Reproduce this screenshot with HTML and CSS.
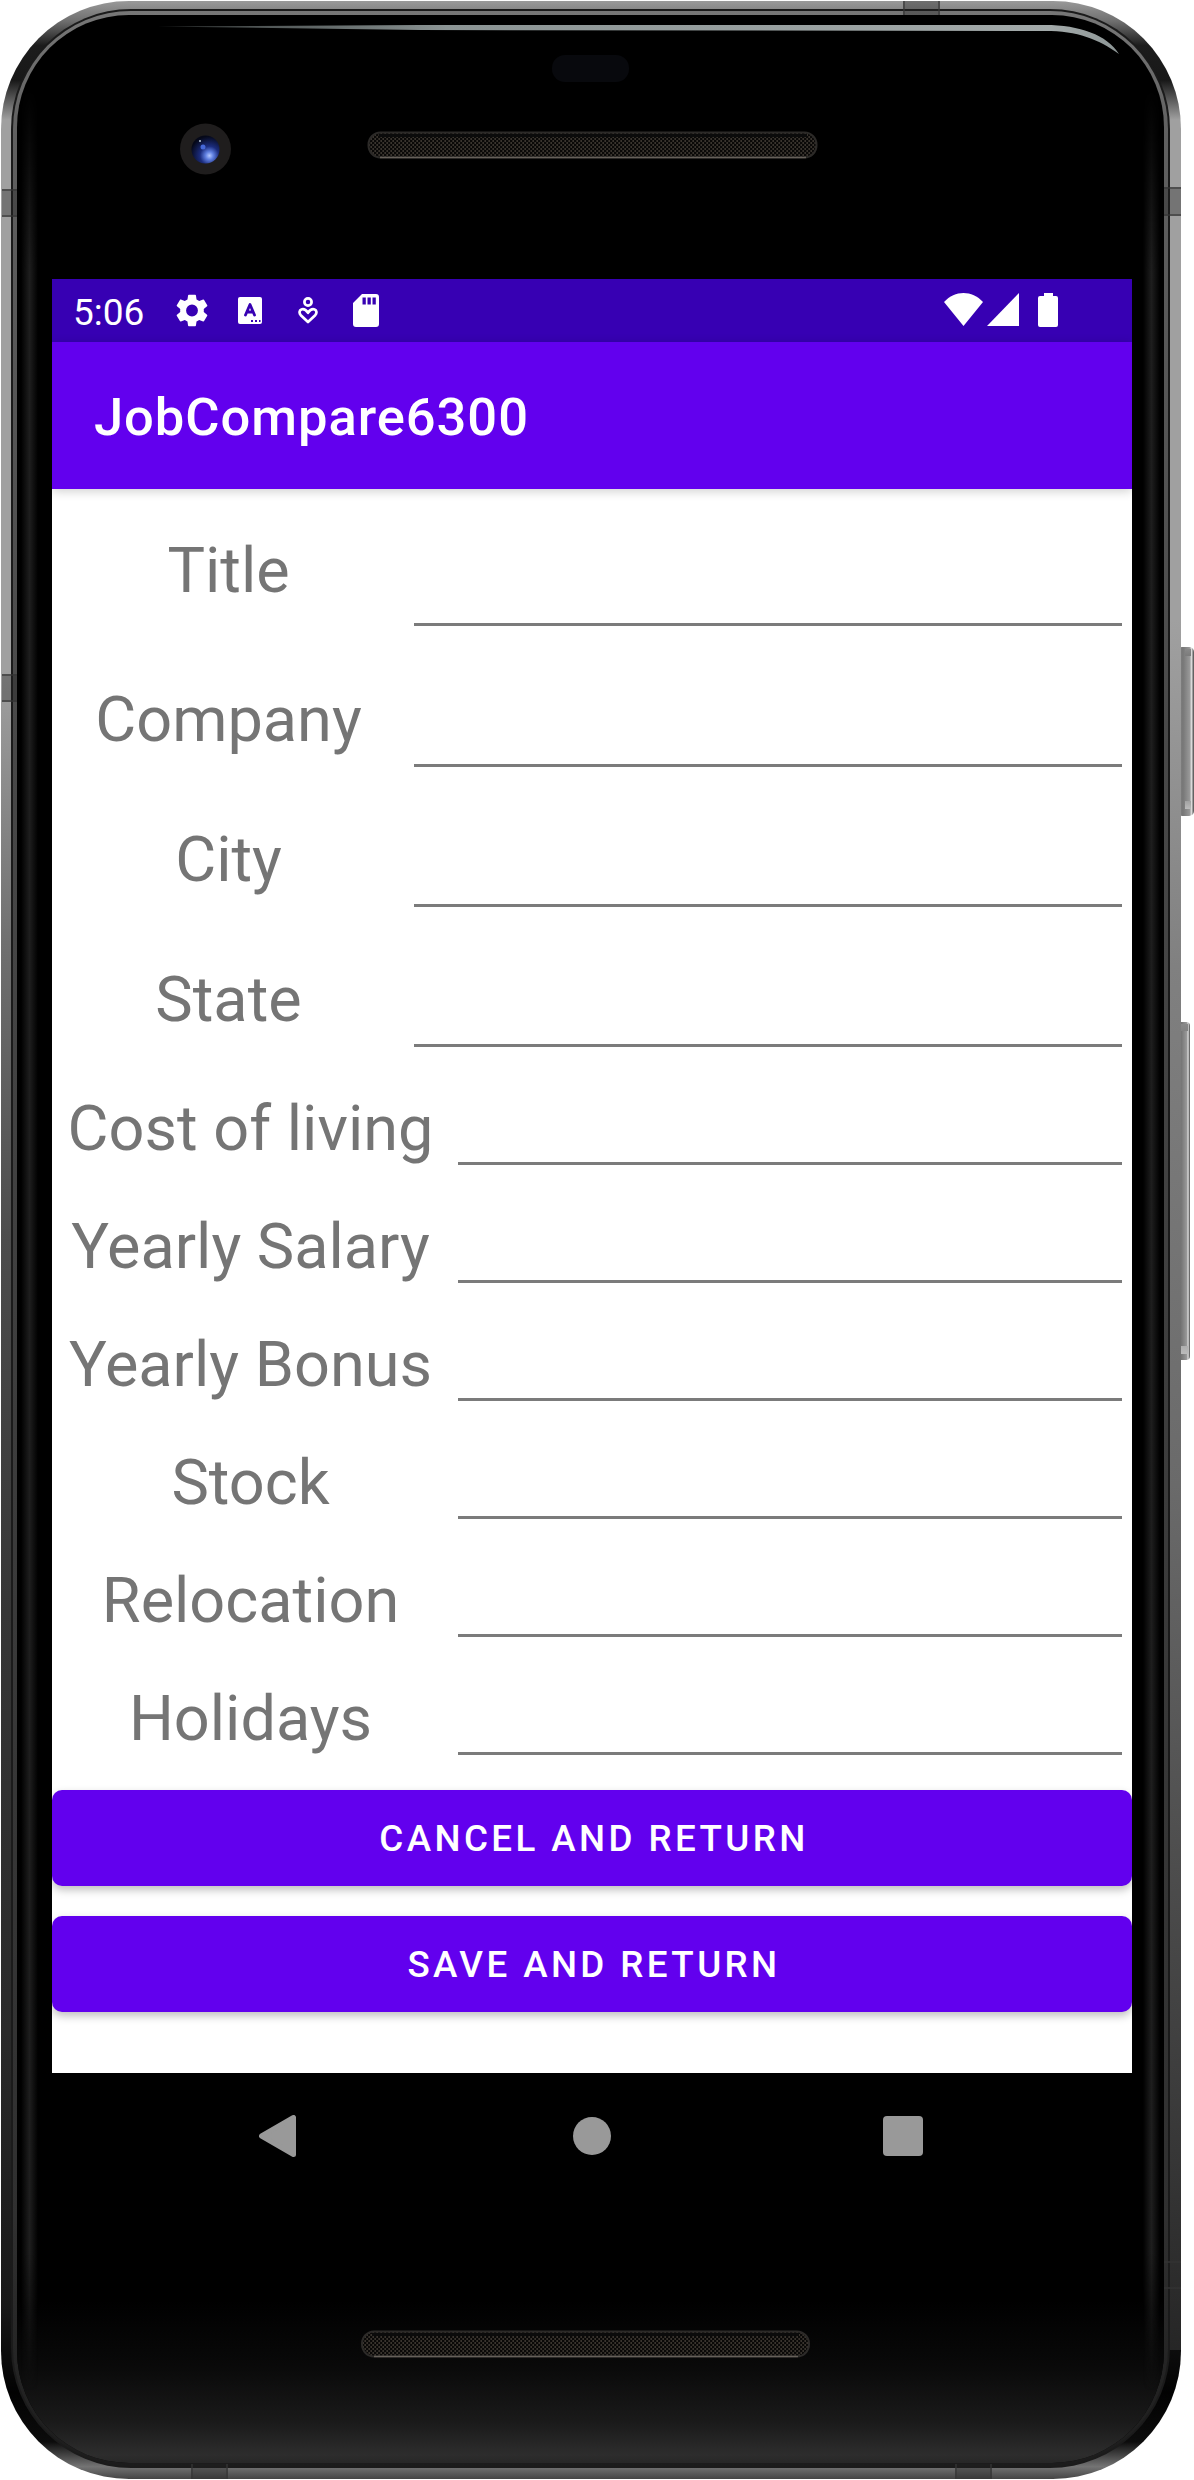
FILE: index.html
```
<!DOCTYPE html>
<html lang="en">
<head>
<meta charset="utf-8">
<title>JobCompare6300</title>
<link rel="stylesheet" href="styles.css">
</head>
<body>
<div class="phone">
  <svg class="frame" viewBox="0 0 1194 2480" aria-hidden="true">
    <defs>
      <linearGradient id="rim" x1="0" y1="0" x2="0" y2="1">
        <stop offset="0" stop-color="#999"/><stop offset=".008" stop-color="#707070"/><stop offset=".018" stop-color="#1c1c1c"/><stop offset=".032" stop-color="#181818"/>
        <stop offset=".048" stop-color="#a0a0a0"/><stop offset=".27" stop-color="#a0a0a0"/><stop offset=".38" stop-color="#707070"/>
        <stop offset=".5" stop-color="#4c4c4c"/><stop offset=".65" stop-color="#363636"/><stop offset=".82" stop-color="#2a2a2a"/><stop offset=".93" stop-color="#181818"/><stop offset=".965" stop-color="#020202"/>
        <stop offset=".985" stop-color="#0c0c0c"/><stop offset=".995" stop-color="#747474"/><stop offset="1" stop-color="#444"/>
      </linearGradient>
      <linearGradient id="rimRight" x1="0" y1="0" x2="0" y2="1">
        <stop offset="0" stop-color="#a0a0a0"/><stop offset=".2" stop-color="#808080"/><stop offset=".5" stop-color="#6a6a6a"/><stop offset=".85" stop-color="#3c3c3c"/><stop offset="1" stop-color="#262626"/>
      </linearGradient>
      <linearGradient id="inner" x1="0" y1="0" x2="0" y2="1">
        <stop offset="0" stop-color="#777"/><stop offset=".05" stop-color="#606060"/><stop offset=".3" stop-color="#484848"/><stop offset=".9" stop-color="#303030"/><stop offset="1" stop-color="#1c1c1c"/>
      </linearGradient>
      <linearGradient id="chin" x1="0" y1="0" x2="0" y2="1">
        <stop offset="0" stop-color="#000"/><stop offset=".4" stop-color="#090909"/><stop offset=".75" stop-color="#1a1a1a"/><stop offset=".95" stop-color="#2d2d2d"/><stop offset="1" stop-color="#272727"/>
      </linearGradient>
      <linearGradient id="sheen"><stop offset="0" stop-color="#1e1e1e" stop-opacity="0"/><stop offset=".5" stop-color="#1e1e1e"/><stop offset="1" stop-color="#1e1e1e" stop-opacity="0"/></linearGradient>
      <linearGradient id="fade" x1="0" y1="0" x2="0" y2="1"><stop offset="0" stop-color="#000"/><stop offset=".08" stop-color="#fff"/><stop offset=".94" stop-color="#fff"/><stop offset="1" stop-color="#000"/></linearGradient>
      <mask id="sides" maskUnits="userSpaceOnUse" x="0" y="90" width="1194" height="2300"><rect y="90" width="1194" height="2300" fill="url(#fade)"/></mask>
      <linearGradient id="key"><stop offset="0" stop-color="#888"/><stop offset=".35" stop-color="#777"/><stop offset=".75" stop-color="#999"/><stop offset=".85" stop-color="#ddd"/><stop offset="1" stop-color="#444"/></linearGradient>
      <linearGradient id="keyEnds" x1="0" y1="0" x2="0" y2="1"><stop offset="0" stop-color="#888"/><stop offset=".4" stop-color="#111"/><stop offset=".7" stop-color="#222"/><stop offset="1" stop-color="#bbb"/></linearGradient>
      <linearGradient id="glint"><stop offset="0" stop-color="#7d8787" stop-opacity=".4"/><stop offset=".3" stop-color="#8b9494"/><stop offset=".93" stop-color="#a3aaaa"/><stop offset="1" stop-color="#8d9696"/></linearGradient>
      <radialGradient id="lens" cx=".64" cy=".72" r=".7"><stop offset="0" stop-color="#b4c8ff"/><stop offset=".2" stop-color="#5f7fe0"/><stop offset=".48" stop-color="#1b2c7d"/><stop offset="1" stop-color="#050818"/></radialGradient>
      <pattern id="mesh" width="4" height="4" patternUnits="userSpaceOnUse"><rect width="4" height="4" fill="#0a0908"/><path d="M.5 0h1.300v2H.5zM2.500 2h1.300v2H2.500z" fill="#453f37"/></pattern>
      <clipPath id="glass"><rect x="17" y="17" width="1147" height="2446" rx="112"/></clipPath>
    </defs>
    <rect x="1177" y="647" width="17" height="169" rx="5" fill="url(#key)"/>
    <path d="M1185 649h6v7h-6zm0 152h6v8h-6z" fill="url(#keyEnds)"/>
    <rect x="1177" y="1022" width="13" height="338" rx="4" fill="url(#key)"/>
    <path d="M1181 1024h7v7h-7zm0 322h7v8h-7z" fill="url(#keyEnds)"/>
    <rect x="1" y="1" width="1180" height="2478" rx="128" fill="url(#rim)"/>
    <rect x="1169" y="620" width="12" height="1730" fill="url(#rimRight)"/>
    <rect x="11" y="9" width="1159" height="2459" rx="120" fill="#1b1b1b"/>
    <rect x="13" y="11" width="1155" height="2455" rx="118" fill="url(#inner)"/>
    <rect x="17" y="15" width="1147" height="2448" rx="112" fill="#000"/>
    <g clip-path="url(#glass)">
      <rect x="17" y="2300" width="1147" height="163" fill="url(#chin)"/>
      <g mask="url(#sides)">
        <rect x="21" y="90" width="17" height="2300" fill="url(#sheen)"/>
        <rect x="1143" y="90" width="17" height="2300" fill="url(#sheen)"/>
      </g>
    </g>
    <path d="M2 190h15m-15 26h15M2 675h15m-15 26h15M1164 188h17m-17 27h17M1164 2262h17m-17 26h17M904 1v14m35-14v14M192 2464v15m35-15v15M956 2464v15m35-15v15" stroke="#333" stroke-width="1.500"/>
    <path d="M2 191h15v24H2zM2 676h15v24H2zM1164 189h17v25h-17zM905 1h33v14h-33zM193 2464h33v15h-33zM957 2464h33v15h-33z" fill="#222" opacity=".35"/>
    <path d="M158 26.500 420 25H1045C1080 25 1107 35 1119 54C1098 39 1078 31 1045 31L420 30Z" fill="url(#glint)"/>
    <rect x="552" y="55" width="77" height="27" rx="13" fill="#08090d"/>
    <circle cx="205.500" cy="149" r="25.500" fill="#1f1d1d"/>
    <circle cx="205.500" cy="149.500" r="14" fill="url(#lens)"/>
    <circle cx="203" cy="147" r="2.500" fill="#4668d8"/><circle cx="200" cy="141" r="1" fill="#bcd"/>
    <g fill="url(#mesh)" stroke="#2c2a28" stroke-width="2">
      <rect x="368.500" y="132.500" width="448" height="25" rx="12"/>
      <rect x="362" y="2331.500" width="447" height="25" rx="12"/>
    </g>
    <path d="M380 157.500H806M374 2356.500H798" stroke="#66605a" stroke-width="1.500"/>
    <path d="M379 135.500H807M372 2334.500H799" stroke="#0b0b0b" stroke-width="3"/>
  </svg>

  <main class="screen">
    <header class="status">
      <span class="clock">5:06</span>
      <svg class="gear" viewBox="2.270 2 19.460 20"><path fill="#fff" d="M19.140 12.940c.04-.3.060-.610.060-.940 0-.320-.020-.640-.070-.940l2.030-1.580a.49.49 0 0 0 .120-.610l-1.920-3.320a.488.488 0 0 0-.590-.220l-2.390.960c-.5-.380-1.030-.7-1.620-.940l-.360-2.540a.484.484 0 0 0-.480-.410h-3.840c-.240 0-.430.170-.470.410l-.360 2.540c-.590.240-1.130.570-1.620.940l-2.390-.960c-.220-.080-.470 0-.590.220L2.740 8.870c-.120.210-.080.470.120.610l2.030 1.580c-.050.3-.090.630-.090.940s.020.640.070.940l-2.030 1.580a.49.49 0 0 0-.120.610l1.920 3.320c.120.220.370.290.590.220l2.390-.960c.5.380 1.030.7 1.620.940l.360 2.540c.050.240.240.410.480.410h3.840c.240 0 .440-.170.470-.410l.360-2.540c.590-.240 1.130-.560 1.620-.940l2.390.960c.220.080.470 0 .590-.220l1.920-3.320c.120-.220.070-.470-.120-.610zM12 15.600A3.600 3.600 0 1 1 12 8.400a3.600 3.600 0 0 1 0 7.200"/></svg>
      <svg class="abox" viewBox="0 0 24 27"><rect width="24" height="27" rx="2" fill="#fff"/><path d="M7.500 18 12 7.500 16.500 18M9 15h6" fill="none" stroke="#3700b3" stroke-width="2.800" stroke-linecap="round" stroke-linejoin="round"/><path d="M13 24h2m2 0h2m2 0h1.500" stroke="#3700b3" stroke-width="2"/></svg>
      <svg class="heart" viewBox="0 0 20 27"><g fill="none" stroke="#fff" stroke-width="2.700"><circle cx="10" cy="5" r="3.600"/><path d="M10 25 2.800 18.200C.9 16 1.200 13.400 3.400 12.500 6 11.500 8 13 10 15.800 12 13 14 11.500 16.600 12.500 18.800 13.400 19.100 16 17.200 18.200Z" stroke-linejoin="round"/></g></svg>
      <svg class="sd" viewBox="0 0 26 33"><path fill="#fff" fill-rule="evenodd" d="M9 0h14a3 3 0 0 1 3 3v27a3 3 0 0 1-3 3H3a3 3 0 0 1-3-3V9zm.5 3.500V10.500h3.300v-7zm5 0v7h3.300v-7zm5 0v7h3.300v-7z"/></svg>
      <svg class="wifi" viewBox="0 0 39 33"><path fill="#fff" d="M0 9C11-3 28-3 39 9L19.500 33z"/></svg>
      <svg class="signal" viewBox="0 0 32 33"><path fill="#fff" d="M32 0v33H0z"/></svg>
      <svg class="battery" viewBox="0 0 20 34"><path fill="#fff" d="M6 0h9v3h3a2 2 0 0 1 2 2v27a2 2 0 0 1-2 2H2a2 2 0 0 1-2-2V5a2 2 0 0 1 2-2h4z"/></svg>
    </header>
    <h1 class="appbar">JobCompare6300</h1>
    <form class="form">
      <label class="row tall first"><span class="name">Title</span><input class="field"></label>
      <label class="row tall"><span class="name">Company</span><input class="field"></label>
      <label class="row tall"><span class="name">City</span><input class="field"></label>
      <label class="row tall"><span class="name">State</span><input class="field"></label>
      <label class="row"><span class="name">Cost of living</span><input class="field"></label>
      <label class="row"><span class="name">Yearly Salary</span><input class="field"></label>
      <label class="row"><span class="name">Yearly Bonus</span><input class="field"></label>
      <label class="row"><span class="name">Stock</span><input class="field"></label>
      <label class="row"><span class="name">Relocation</span><input class="field"></label>
      <label class="row"><span class="name">Holidays</span><input class="field"></label>
      <div class="actions">
        <button class="btn" type="button">CANCEL AND RETURN</button>
        <button class="btn" type="button">SAVE AND RETURN</button>
      </div>
    </form>
  </main>
  <nav class="nav">
    <svg class="back" viewBox="0 0 37 42"><path d="M34.500 2.500v37L2.500 21z" fill="#999" stroke="#999" stroke-width="5" stroke-linejoin="round"/></svg>
    <svg class="home" viewBox="0 0 38 38"><circle cx="19" cy="19" r="19" fill="#999"/></svg>
    <svg class="recent" viewBox="0 0 40 40"><rect width="40" height="40" rx="4" fill="#999"/></svg>
  </nav>
</div>
</body>
</html>
```
FILE: styles.css
```
* { box-sizing: border-box; }
body { margin: 0; background: #fff; font-family: Roboto, sans-serif; }
.phone { position: relative; width: 1194px; height: 2480px; padding: 279px 62px 0 52px; overflow: hidden; }
.frame { position: absolute; inset: 0; width: 1194px; height: 2480px; }
.screen { position: relative; width: 1080px; height: 1794px; background: #fff; overflow: hidden; display: flex; flex-direction: column; }
.status { height: 63px; flex: none; background: #3700b3; display: flex; align-items: flex-start; padding-left: 21px; color: #fff; }
.status svg { flex: none; }
.clock { width: 103px; font-size: 37px; line-height: 43px; margin-top: 12px; }
.gear { width: 32px; height: 33px; margin-top: 15px; }
.abox { width: 24px; height: 27px; margin: 18px 0 0 30px; }
.heart { width: 20px; height: 27px; margin: 18px 0 0 36px; }
.sd { width: 26px; height: 33px; margin: 15px 0 0 35px; }
.wifi { width: 39px; height: 33px; margin: 14px 0 0 565px; }
.signal { width: 32px; height: 33px; margin: 14px 0 0 4px; }
.battery { width: 20px; height: 34px; margin: 14px 0 0 19px; }
.appbar { position: relative; flex: none; height: 147px; margin: 0; padding-left: 42px; background: #6200ee; color: #fff; font-size: 52.5px; font-weight: 500; line-height: 150px; letter-spacing: .95px; box-shadow: 0 2px 10px rgba(0,0,0,.2); }
.form { display: flex; flex-direction: column; }
.row { display: grid; grid-template-columns: 396px 1fr; height: 118px; padding-right: 10px; }
.row.tall { grid-template-columns: 352px 1fr; height: 140px; }
.row.first { height: 138px; }
.name { color: #757575; font-size: 63px; line-height: 74px; text-align: center; padding: 45px 0 0 1px; white-space: nowrap; }
.tall .name { padding-top: 56px; }
.first .name { padding-top: 45px; }
.field { width: calc(100% - 10px); min-width: 0; height: calc(100% - 1px); margin-left: 10px; padding: 0; border: 0; border-bottom: 3px solid #7b7b7b; border-radius: 0; background: transparent; outline: none; }
.tall:not(.first) .field { height: 100%; }
.actions { display: flex; flex-direction: column; gap: 30px; padding-top: 35px; }
.btn { height: 96px; border: 0; border-radius: 10px; padding: 2px 0 0 4px; background: #6200ee; color: #fff; font: 500 36.75px/94px Roboto, sans-serif; letter-spacing: 3.4px; box-shadow: 0 4px 8px rgba(0,0,0,.25); }
.nav { position: relative; display: flex; align-items: center; height: 126px; padding-left: 207px; }
.back { width: 37px; height: 42px; }
.home { width: 38px; height: 38px; margin-left: 277px; }
.recent { width: 40px; height: 40px; margin-left: 272px; }
```
